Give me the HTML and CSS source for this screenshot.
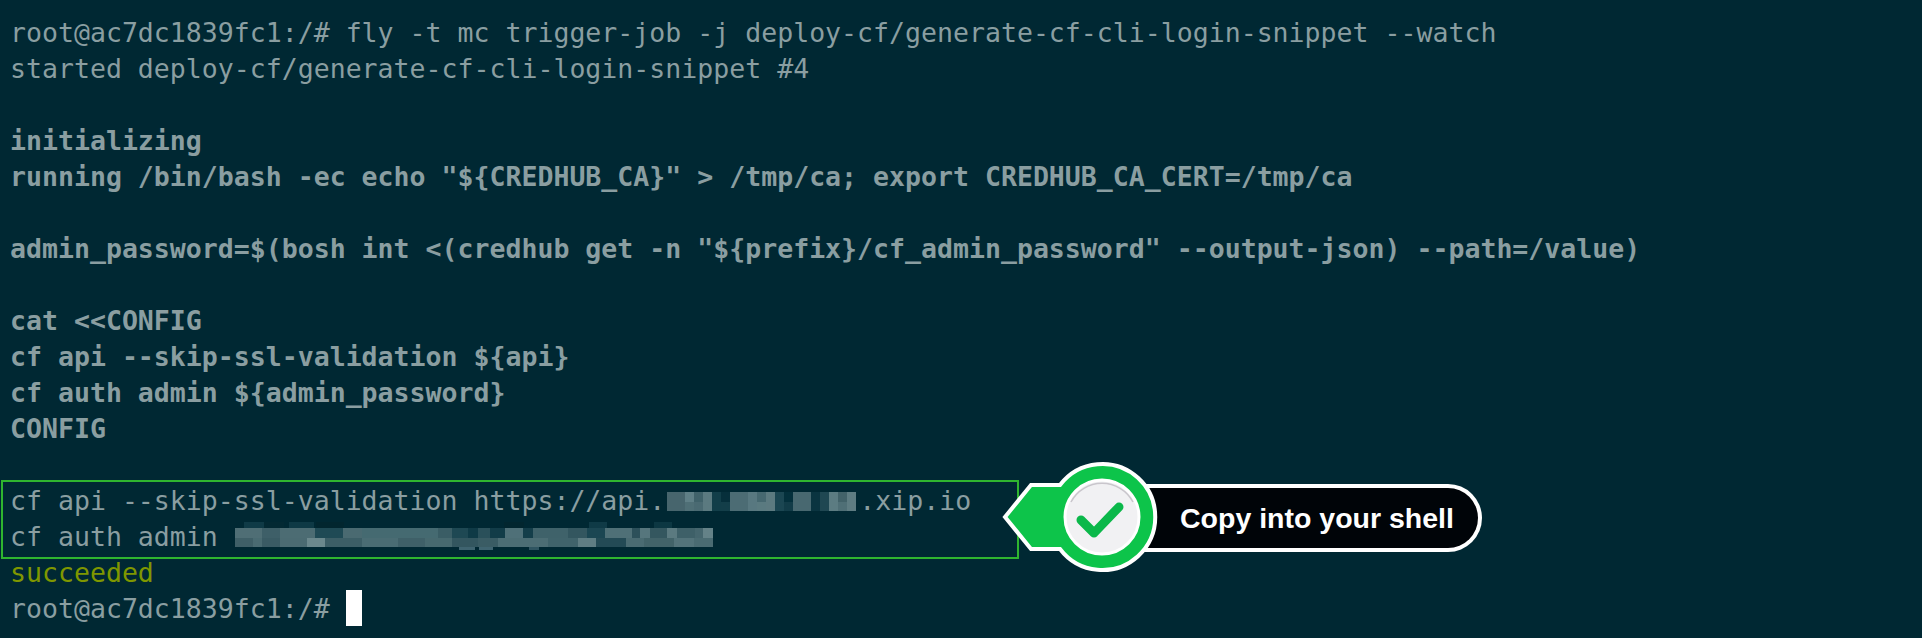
FILE: index.html
```html
<!DOCTYPE html>
<html lang="en">
<head>
<meta charset="utf-8">
<title>fly trigger-job</title>
<link rel="stylesheet" href="styles.css">
</head>
<body>
<main class="terminal">
<div class="line">root@ac7dc1839fc1:/# fly -t mc trigger-job -j deploy-cf/generate-cf-cli-login-snippet --watch</div>
<div class="line">started deploy-cf/generate-cf-cli-login-snippet #4</div>
<div class="line"></div>
<div class="line bold">initializing</div>
<div class="line bold">running /bin/bash -ec echo "${CREDHUB_CA}" &gt; /tmp/ca; export CREDHUB_CA_CERT=/tmp/ca</div>
<div class="line"></div>
<div class="line bold">admin_password=$(bosh int &lt;(credhub get -n "${prefix}/cf_admin_password" --output-json) --path=/value)</div>
<div class="line"></div>
<div class="line bold">cat &lt;&lt;CONFIG</div>
<div class="line bold">cf api --skip-ssl-validation ${api}</div>
<div class="line bold">cf auth admin ${admin_password}</div>
<div class="line bold">CONFIG</div>
<div class="line"></div>
<div class="line">cf api --skip-ssl-validation https://api.<svg class="mask" width="194" height="36" viewBox="0 0 194 36" shape-rendering="crispEdges">
<rect x="2" y="8" width="18" height="19" fill="#47656d"/><rect x="20" y="8" width="9" height="10" fill="#5f7f86"/><rect x="20" y="18" width="9" height="9" fill="#4f6f76"/><rect x="29" y="8" width="9" height="10" fill="#40626a"/><rect x="29" y="18" width="9" height="9" fill="#4a6a72"/><rect x="38" y="8" width="9" height="19" fill="#5b7a80"/>
<rect x="47" y="8" width="9" height="19" fill="#123e49"/><rect x="56" y="8" width="9" height="10" fill="#062f3b"/><rect x="56" y="18" width="9" height="9" fill="#133e49"/>
<rect x="65" y="8" width="18" height="19" fill="#4c6c74"/><rect x="83" y="8" width="9" height="19" fill="#587880"/><rect x="92" y="8" width="9" height="10" fill="#466870"/><rect x="92" y="18" width="9" height="9" fill="#5a7a80"/><rect x="101" y="8" width="9" height="19" fill="#5c7a80"/>
<rect x="110" y="8" width="9" height="19" fill="#1b4652"/><rect x="119" y="8" width="9" height="10" fill="#04303c"/><rect x="119" y="18" width="9" height="9" fill="#123c48"/>
<rect x="128" y="8" width="18" height="19" fill="#486870"/><rect x="146" y="8" width="9" height="19" fill="#0a3440"/><rect x="155" y="8" width="9" height="19" fill="#1f4752"/>
<rect x="164" y="8" width="9" height="19" fill="#5c7c82"/><rect x="173" y="8" width="9" height="10" fill="#426269"/><rect x="173" y="18" width="9" height="9" fill="#4f6f76"/><rect x="182" y="8" width="9" height="19" fill="#5e7c82"/>
</svg>.xip.io</div>
<div class="line">cf auth admin <svg class="mask" width="480" height="36" viewBox="0 0 480 36" shape-rendering="crispEdges">
<rect x="10" y="2" width="20" height="6" fill="#0f3a46"/><rect x="30" y="2" width="20" height="6" fill="#032933"/><rect x="55" y="2" width="25" height="6" fill="#0e3945"/><rect x="82" y="2" width="28" height="6" fill="#02262f"/><rect x="270" y="2" width="20" height="6" fill="#02262f"/><rect x="355" y="2" width="18" height="6" fill="#0f3a46"/><rect x="420" y="2" width="18" height="6" fill="#0c3742"/>
<rect x="1" y="8" width="27" height="10" fill="#4f6e75"/><rect x="28" y="8" width="18" height="10" fill="#3e5f68"/><rect x="46" y="8" width="35" height="10" fill="#4c6c73"/><rect x="81" y="8" width="28" height="10" fill="#1f4a55"/><rect x="109" y="8" width="19" height="10" fill="#4a6a71"/><rect x="128" y="8" width="76" height="10" fill="#456a71"/><rect x="204" y="8" width="14" height="10" fill="#3a5d65"/><rect x="218" y="8" width="16" height="10" fill="#1e4853"/><rect x="234" y="8" width="10" height="10" fill="#0f3a46"/><rect x="244" y="8" width="12" height="10" fill="#2a505a"/><rect x="256" y="8" width="15" height="10" fill="#123c48"/><rect x="271" y="8" width="18" height="10" fill="#4f7078"/><rect x="289" y="8" width="10" height="10" fill="#143e4a"/><rect x="299" y="8" width="35" height="10" fill="#3f626a"/><rect x="334" y="8" width="19" height="10" fill="#33565f"/><rect x="353" y="8" width="18" height="10" fill="#1b4652"/><rect x="371" y="8" width="27" height="10" fill="#4f7077"/><rect x="398" y="8" width="8" height="10" fill="#2c505a"/><rect x="406" y="8" width="10" height="10" fill="#56767d"/><rect x="416" y="8" width="17" height="10" fill="#34575f"/><rect x="433" y="8" width="10" height="10" fill="#5b7a80"/><rect x="443" y="8" width="18" height="10" fill="#3e6068"/><rect x="461" y="8" width="8" height="10" fill="#45666e"/><rect x="469" y="8" width="10" height="10" fill="#648288"/>
<rect x="1" y="18" width="18" height="9" fill="#3f5f67"/><rect x="19" y="18" width="9" height="9" fill="#4a6b72"/><rect x="28" y="18" width="18" height="9" fill="#3a5b64"/><rect x="46" y="18" width="27" height="9" fill="#4b6b72"/><rect x="73" y="18" width="18" height="9" fill="#6b888d"/><rect x="91" y="18" width="37" height="9" fill="#3c5e66"/><rect x="128" y="18" width="36" height="9" fill="#4a6c73"/><rect x="164" y="18" width="27" height="9" fill="#3f6068"/><rect x="191" y="18" width="27" height="9" fill="#47696f"/><rect x="218" y="18" width="26" height="9" fill="#33565f"/><rect x="244" y="18" width="20" height="9" fill="#3a5c64"/><rect x="264" y="18" width="50" height="9" fill="#4c6d74"/><rect x="314" y="18" width="30" height="9" fill="#40636b"/><rect x="344" y="18" width="18" height="9" fill="#5f7d83"/><rect x="362" y="18" width="30" height="9" fill="#234a55"/><rect x="392" y="18" width="18" height="9" fill="#4a6b72"/><rect x="410" y="18" width="30" height="9" fill="#426369"/><rect x="440" y="18" width="20" height="9" fill="#53737a"/><rect x="460" y="18" width="19" height="9" fill="#4a6b72"/>
<rect x="225" y="27" width="16" height="3" fill="#3f6470"/><rect x="245" y="27" width="14" height="3" fill="#3f6470"/><rect x="295" y="27" width="10" height="3" fill="#2f5561"/>
</svg></div>
<div class="line success">succeeded</div>
<div class="line">root@ac7dc1839fc1:/# <span class="cursor"></span></div>
<div class="highlight"></div>
<div class="callout">
<svg class="badge" width="158" height="114" viewBox="0 0 158 114"><path d="M3 57 L29 25 H58 A53 53 0 1 1 58 89 H29 Z" fill="#0dc44a" stroke="#fff" stroke-width="4" stroke-linejoin="miter"/><circle cx="100" cy="57" r="37" fill="#f1f1f3" stroke="#fff" stroke-width="3"/><path d="M69 42 A35 35 0 0 1 131 42" fill="none" stroke="#c9c6cc" stroke-width="1.5"/><path d="M79 60 L92 73 L117 47" fill="none" stroke="#0bb84a" stroke-width="9" stroke-linecap="round" stroke-linejoin="round"/></svg>
<div class="pill">Copy into your shell</div>
</div>
</main>
</body>
</html>
```
FILE: styles.css
```css
html, body { margin: 0; padding: 0; background: #002833; }
body { width: 1922px; height: 638px; overflow: hidden; }
.terminal { position: relative; padding: 15px 0 0 10px; height: 623px; font-family: "DejaVu Sans Mono", monospace; font-size: 26.56px; color: #8a9ea1; }
.line { height: 36px; line-height: 36px; white-space: pre; }
.bold { font-weight: 700; }
.success { color: #7f9700; }
.mask { vertical-align: top; margin-top: 1px; filter: blur(0.6px); }
.cursor { display: inline-block; vertical-align: top; margin-top: -1px; width: 16px; height: 36px; background: #fff; }
.highlight { position: absolute; left: 1px; top: 480px; width: 1014px; height: 75px; border: 2px solid #2fb52f; }
.callout { position: absolute; left: 1002px; top: 460px; display: flex; align-items: center; }
.badge { position: relative; z-index: 1; flex: none; }
.pill { margin-left: -37px; margin-top: 2px; width: 298px; height: 60px; border: 4px solid #fff; border-left: 0; border-radius: 0 34px 34px 0; background: #000408; color: #fff; font: 700 28.5px/60px "Liberation Sans", sans-serif; padding-left: 57px; }
```
